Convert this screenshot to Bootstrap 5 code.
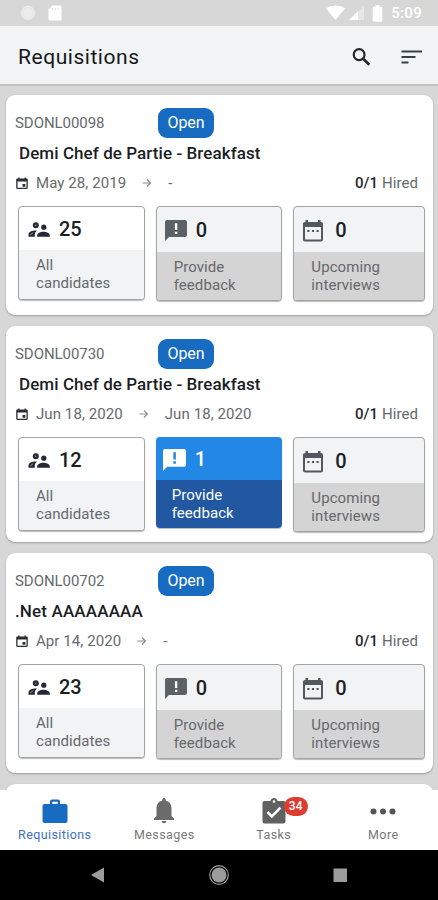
<!DOCTYPE html>
<html lang="en">
<head>
<meta charset="utf-8">
<meta name="viewport" content="width=device-width, initial-scale=1">
<title>Requisitions</title>
<link href="https://cdn.jsdelivr.net/npm/bootstrap@5.3.0/dist/css/bootstrap.min.css" rel="stylesheet">
<style>
body{font-family:Roboto,"Liberation Sans",sans-serif;background:#d7d7d7;color:#1b1e24;font-size:15px;line-height:17px;letter-spacing:.08px}
.screen{width:438px;height:900px}
svg{display:block;flex:none}
.statusbar{height:26px;background:#d7d7d7;color:#fff;padding:0 16px 0 20px;font-size:15px;letter-spacing:.3px}
.appbar{height:60px;background:#f1f3f5;border-bottom:2px solid #c0c1c2;padding:0 15px 0 18px}
.appbar h1{font-size:21px;font-weight:400;letter-spacing:.54px;line-height:28px;padding-top:3px;color:#15171b}
.feed{height:704px;padding:9px 5px 0 6px}
.req{height:220px;margin-bottom:11px;padding:13px 8px 0 9px;border:0;border-radius:9px;box-shadow:0 1px 2px #999}
.req-b{height:216px}
.line{height:30px}
.code{width:143px;font-size:15px;color:#66696d;letter-spacing:-.06px}
.state{width:56px;height:30px;border-radius:9px;background:#176bc0;color:#fff;font-size:16px;font-weight:400;letter-spacing:-.1px;padding:0}
.name{font-size:17px;font-weight:500;letter-spacing:.07px;padding-left:4px}
.name-flush{padding-left:0;letter-spacing:.15px}
.dates{color:#66696d;padding:0 7px 0 1px}
.dates strong{font-weight:500;color:#24272c}
.tiles{margin-top:8px;padding-left:3px;gap:11px}
.tile{width:127px;height:94px;border:1px solid #a3a4a6;border-radius:4px;overflow:hidden;box-shadow:0 1px 1px #bbb;background:#fff;color:#66696d}
.tile-top{height:43px;padding:2px 0 0 9px;font-size:20px;font-weight:500;color:#1b1e24;letter-spacing:0}
.tile-foot{flex:1;padding:7px 0 0 17px;background:#f1f3f5;line-height:17.5px}
.tile-off{height:95px;background:#f1f3f5}
.tile-off .tile-top{height:45px}
.tile-off .tile-foot{background:#d4d4d4}
.num{padding-left:9px}
.note{color:#5c6067;--hole:#fff;margin-left:-1px}
.note-hot{color:#fff;--hole:#2287e5;margin-left:0}
.tile-wide{width:132px}
.tile-wide .num{padding-left:12px}
.tile-hot{height:91px;border:0;color:#fff}
.tile-hot .tile-top{height:43px;background:#2287e5;color:#fff;padding-left:7px}
.tile-hot .tile-foot{background:#2258a2;padding-left:16px}
.tabs{height:60px;background:#fff}
.tab{width:109.5px;padding-top:6px;font-size:12.5px;color:#777;letter-spacing:.4px;line-height:17px}
.tab-on{color:#3b72c8}
.count{position:absolute;left:22px;top:1px;width:24px;height:19px;border-radius:10px;background:#de3c31;color:#fff;font-size:12px;line-height:19px;font-weight:500;text-align:center;letter-spacing:.2px}
.sysbar{height:50px;background:#000}
</style>
<script src="https://cdn.jsdelivr.net/npm/bootstrap@5.3.0/dist/js/bootstrap.bundle.min.js"></script>
</head>
<body>
<svg width="0" height="0" class="position-absolute">
<symbol id="i-date" viewBox="0 0 12 13"><path fill="#2b2e33" fill-rule="evenodd" d="M2.200.5h1.300v1h5V.5h1.300v1h.7c.8 0 1.300.5 1.300 1.200v8.100c0 .7-.5 1.200-1.300 1.200h-9C.7 12 .2 11.500.2 10.800V2.700c0-.7.5-1.200 1.300-1.200h.7zM1.500 4.600v6.100h9V4.600zM6.500 7h2.900v2.700H6.500z"/></symbol>
<symbol id="i-arrow" viewBox="0 0 10 10"><path fill="none" stroke="#8d8f92" stroke-width="1.200" d="M.5 5h8M5 1.500 8.500 5 5 8.500"/></symbol>
<symbol id="i-people" viewBox="0 0 22 16"><g fill="#232938"><circle cx="7.800" cy="3.300" r="3"/><circle cx="15.800" cy="5.200" r="2.600"/><path d="M.5 14.800v-2.300C.5 9.600 4.700 8.200 9 8.500 7.500 9.700 6.800 11.100 6.800 12.800v2zM9.200 14.800v-1.500c0-2.400 3.500-3.600 6.300-3.600s6.300 1.200 6.300 3.600v1.500z"/></g><path d="m2.500 13 2.500-2.500" stroke="#fff" stroke-width=".6"/><circle cx="7.800" cy="3.300" r=".7" fill="#aab"/></symbol>
<symbol id="i-note" viewBox="0 0 22 21"><path fill="currentColor" d="M2 0h18c1.200 0 2 .8 2 2v13c0 1.200-.8 2-2 2H4l-4 4V2C0 .8.8 0 2 0z"/><path fill="var(--hole)" d="M9.900 3.200h2.400V10H9.900zM9.900 11.800h2.400v2.300H9.900z"/></symbol>
<symbol id="i-cal" viewBox="0 0 20 22"><path fill="#53575e" fill-rule="evenodd" d="M2.500 0H5v2h10V0h2.500v2h.5c1.200 0 2 .8 2 2v15.500c0 1.200-.8 2-2 2H2c-1.200 0-2-.8-2-2V4c0-1.200.8-2 2-2h.5zM2 7v12.500h16V7z"/><path fill="#53575e" d="M4.300 10h2.200v2H4.300zm4.600 0h2.200v2H8.900zm4.600 0h2.200v2h-2.200z"/></symbol>
</svg>
<div class="screen d-flex flex-column overflow-hidden">
  <div class="statusbar d-flex align-items-center">
    <svg width="16" height="16" viewBox="0 0 16 16"><circle cx="8" cy="8" r="7.200" fill="#ececec"/><circle cx="8" cy="8" r="5.500" fill="none" stroke="#e4e4e4" stroke-dasharray="2 1"/></svg>
    <svg class="ms-2 me-auto ps-1" width="18" height="16" viewBox="1 0 14 16"><path fill="#fff" d="M5.500.5H13c1 0 1.500.5 1.500 1.500v12c0 1-.5 1.500-1.500 1.500H3c-1 0-1.500-.5-1.500-1.500V4.500z"/><path d="M5.500 3v2M8.300 3v2M11 3v2" stroke="#ddd"/></svg>
    <svg width="19" height="16" viewBox="0 0 19 16"><path fill="#fff" d="M0 3.500c5.500-4 13.500-4 19 0L9.500 15z"/></svg>
    <svg class="ms-1" width="15" height="14" viewBox="0 0 15 14"><path fill="#e6e6e6" d="M15 0v14H0z"/><path fill="#fff" d="M9 5.600V14H0z"/></svg>
    <svg class="ms-2" width="11" height="17" viewBox="0 0 11 17"><path fill="#fff" d="M3.500 0h4v1.800H9c1 0 1.300.4 1.300 1.200v12.500c0 .8-.4 1.200-1.300 1.200H2c-.9 0-1.300-.4-1.300-1.200V3c0-.8.4-1.200 1.300-1.200h1.500z"/></svg>
    <span class="ms-2 fw-medium">5:09</span>
  </div>
  <header class="appbar d-flex align-items-center">
    <h1 class="m-0 me-auto">Requisitions</h1>
    <svg class="mt-1" width="19" height="20" viewBox="0 0 20 20" fill="none" stroke="#24272c"><circle cx="7.500" cy="7.500" r="5.700" stroke-width="2.300"/><path stroke-width="2.800" d="m11.800 11.800 6.400 6.400"/></svg>
    <svg class="ms-4 ps-1 mt-1" width="28" height="14" viewBox="0 0 24 14" fill="none" stroke="#34424c" stroke-width="2"><path d="M2.500 1.500h20.500M2.500 7h14M2.500 12.500h7"/></svg>
  </header>
  <main class="feed overflow-hidden">
    <article class="card req">
      <div class="line d-flex align-items-center"><span class="code">SDONL00098</span><span class="badge state d-flex align-items-center justify-content-center">Open</span></div>
      <div class="line name d-flex align-items-center">Demi Chef de Partie - Breakfast</div>
      <div class="line dates d-flex align-items-center"><svg width="12" height="13"><use href="#i-date"/></svg><span class="ps-2">May 28, 2019</span><svg class="ms-3" width="10" height="10"><use href="#i-arrow"/></svg><span class="ms-3">-</span><span class="ms-auto"><strong>0/1</strong> Hired</span></div>
      <div class="tiles d-flex">
        <div class="tile d-flex flex-column"><div class="tile-top d-flex align-items-center"><svg width="22" height="16"><use href="#i-people"/></svg><span class="num">25</span></div><div class="tile-foot">All<br>candidates</div></div>
        <div class="tile tile-off d-flex flex-column"><div class="tile-top d-flex align-items-center"><svg class="note" width="22" height="21"><use href="#i-note"/></svg><span class="num">0</span></div><div class="tile-foot">Provide<br>feedback</div></div>
        <div class="tile tile-off tile-wide d-flex flex-column"><div class="tile-top d-flex align-items-center"><svg width="20" height="22"><use href="#i-cal"/></svg><span class="num">0</span></div><div class="tile-foot">Upcoming<br>interviews</div></div>
      </div>
    </article>
    <article class="card req req-b">
      <div class="line d-flex align-items-center"><span class="code">SDONL00730</span><span class="badge state d-flex align-items-center justify-content-center">Open</span></div>
      <div class="line name d-flex align-items-center">Demi Chef de Partie - Breakfast</div>
      <div class="line dates d-flex align-items-center"><svg width="12" height="13"><use href="#i-date"/></svg><span class="ps-2">Jun 18, 2020</span><svg class="ms-3" width="10" height="10"><use href="#i-arrow"/></svg><span class="ms-3">Jun 18, 2020</span><span class="ms-auto"><strong>0/1</strong> Hired</span></div>
      <div class="tiles d-flex">
        <div class="tile d-flex flex-column"><div class="tile-top d-flex align-items-center"><svg width="22" height="16"><use href="#i-people"/></svg><span class="num">12</span></div><div class="tile-foot">All<br>candidates</div></div>
        <div class="tile tile-hot d-flex flex-column"><div class="tile-top d-flex align-items-center"><svg class="note note-hot" width="23" height="22"><use href="#i-note"/></svg><span class="num">1</span></div><div class="tile-foot">Provide<br>feedback</div></div>
        <div class="tile tile-off tile-wide d-flex flex-column"><div class="tile-top d-flex align-items-center"><svg width="20" height="22"><use href="#i-cal"/></svg><span class="num">0</span></div><div class="tile-foot">Upcoming<br>interviews</div></div>
      </div>
    </article>
    <article class="card req">
      <div class="line d-flex align-items-center"><span class="code">SDONL00702</span><span class="badge state d-flex align-items-center justify-content-center">Open</span></div>
      <div class="line name name-flush d-flex align-items-center">.Net AAAAAAAA</div>
      <div class="line dates d-flex align-items-center"><svg width="12" height="13"><use href="#i-date"/></svg><span class="ps-2">Apr 14, 2020</span><svg class="ms-3" width="10" height="10"><use href="#i-arrow"/></svg><span class="ms-3">-</span><span class="ms-auto"><strong>0/1</strong> Hired</span></div>
      <div class="tiles d-flex">
        <div class="tile d-flex flex-column"><div class="tile-top d-flex align-items-center"><svg width="22" height="16"><use href="#i-people"/></svg><span class="num">23</span></div><div class="tile-foot">All<br>candidates</div></div>
        <div class="tile tile-off d-flex flex-column"><div class="tile-top d-flex align-items-center"><svg class="note" width="22" height="21"><use href="#i-note"/></svg><span class="num">0</span></div><div class="tile-foot">Provide<br>feedback</div></div>
        <div class="tile tile-off tile-wide d-flex flex-column"><div class="tile-top d-flex align-items-center"><svg width="20" height="22"><use href="#i-cal"/></svg><span class="num">0</span></div><div class="tile-foot">Upcoming<br>interviews</div></div>
      </div>
    </article>
    <article class="card req"></article>
  </main>
  <nav class="tabs d-flex">
    <div class="tab tab-on d-flex flex-column align-items-center"><svg width="26" height="30" viewBox="0 0 26 30"><path fill="#176bc0" fill-rule="evenodd" d="M8 8V5.500C8 4.200 9 3.500 10 3.500h6c1.200 0 2 .8 2 2V8h5.500C24.800 8 25.500 9 25.500 10v15c0 1.200-.9 2-2 2h-21c-1.100 0-2-.8-2-2V10c0-1.200.9-2 2-2zm2.300 0h5.400V5.800h-5.400z"/></svg><span>Requisitions</span></div>
    <div class="tab d-flex flex-column align-items-center"><svg width="22" height="30" viewBox="0 0 22 30"><path fill="#6b6b6b" d="M11 2c1 0 1.700.7 1.700 1.700v.8c3.700.8 5.800 4 5.800 7.500v8l2.500 2.600V24H1v-1.400L3.500 20v-8c0-3.500 2.100-6.700 5.800-7.500v-.8C9.300 2.700 10 2 11 2zM8.700 25h4.600c0 1.300-1 2.300-2.300 2.300S8.700 26.300 8.700 25z"/></svg><span>Messages</span></div>
    <div class="tab d-flex flex-column align-items-center"><div class="position-relative"><svg width="24" height="30" viewBox="0 0 24 30"><path fill="#616161" d="M2.500 5H8.400c.5-1.800 1.900-3 3.600-3s3.100 1.200 3.600 3h5.900c1.200 0 2 .9 2 2v18.500c0 1.100-.8 2-2 2h-19c-1.200 0-2-.9-2-2V7c0-1.100.8-2 2-2z"/><circle cx="12" cy="5.500" r="1.300" fill="#fff"/><path fill="none" stroke="#fff" stroke-width="2.600" d="m5.500 16 4.300 4.300 8.700-8.700"/></svg><span class="count">34</span></div><span>Tasks</span></div>
    <div class="tab d-flex flex-column align-items-center"><svg width="26" height="30" viewBox="0 0 26 30" fill="#555"><circle cx="3.500" cy="15.500" r="3"/><circle cx="13" cy="15.500" r="3"/><circle cx="22.500" cy="15.500" r="3"/></svg><span>More</span></div>
  </nav>
  <div class="sysbar d-flex align-items-center justify-content-center">
    <svg width="256" height="22" viewBox="0 0 256 22" fill="#9b9b9b"><path d="M0 11 13 3.500v15z"/><circle cx="128" cy="11" r="7.500"/><circle cx="128" cy="11" r="9.300" fill="none" stroke="#9b9b9b" stroke-width="1.200"/><path d="M242.500 4.500H256V18h-13.500z"/></svg>
  </div>
</div>
</body>
</html>
